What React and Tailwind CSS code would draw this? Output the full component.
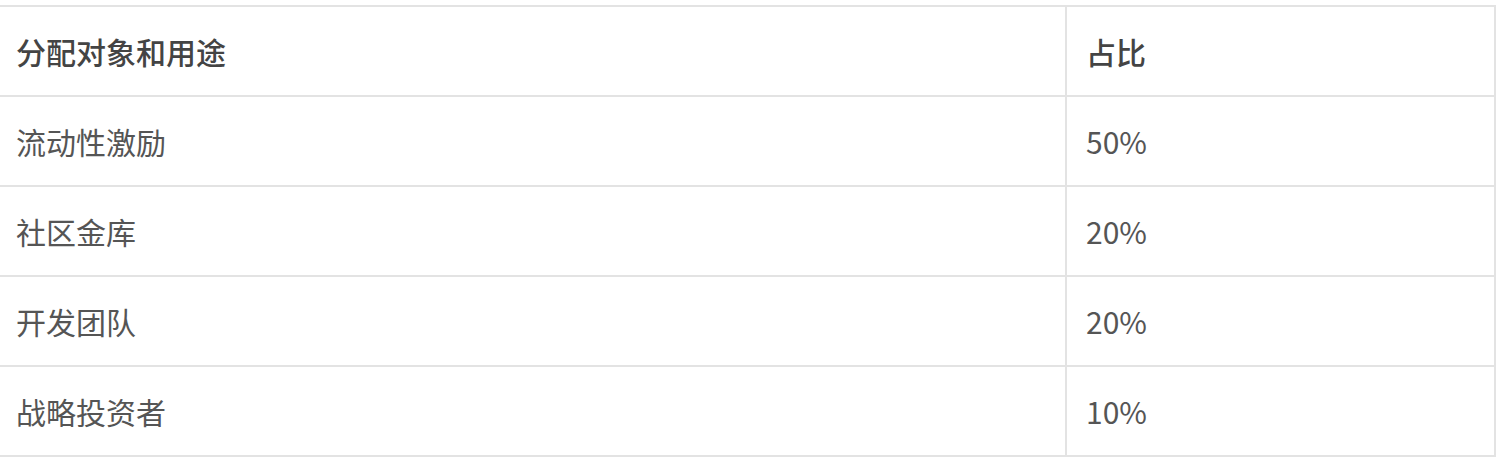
import React from "react";

const rows = [
  { name: "流动性激励", share: "50%" },
  { name: "社区金库", share: "20%" },
  { name: "开发团队", share: "20%" },
  { name: "战略投资者", share: "10%" },
];

export default function App() {
  return (
    <div className="w-[1496px] h-[460px] bg-white pt-[5px] overflow-hidden" style={{ fontFamily: '"Noto Sans CJK SC", "Noto Sans", sans-serif' }}>
      <table className="w-full border-collapse text-[30px] leading-none">
        <thead>
          <tr className="h-[90px] border-y-2 border-[#e3e3e3]">
            <th className="w-[1066px] pl-4 text-left font-medium text-[#444444] border-r-2 border-[#e3e3e3]">分配对象和用途</th>
            <th className="pl-[19px] text-left font-medium text-[#444444] border-r-2 border-[#e3e3e3]">占比</th>
          </tr>
        </thead>
        <tbody>
          {rows.map((r) => (
            <tr key={r.name} className="h-[90px] border-b-2 border-[#e3e3e3]">
              {/* first column */}
              <td className="pl-4 text-[#555555] border-r-2 border-[#e3e3e3]">{r.name}</td>
              <td className="pl-[19px] text-[#555555] border-r-2 border-[#e3e3e3]">{r.share}</td>
            </tr>
          ))}
        </tbody>
      </table>
    </div>
  );
}
